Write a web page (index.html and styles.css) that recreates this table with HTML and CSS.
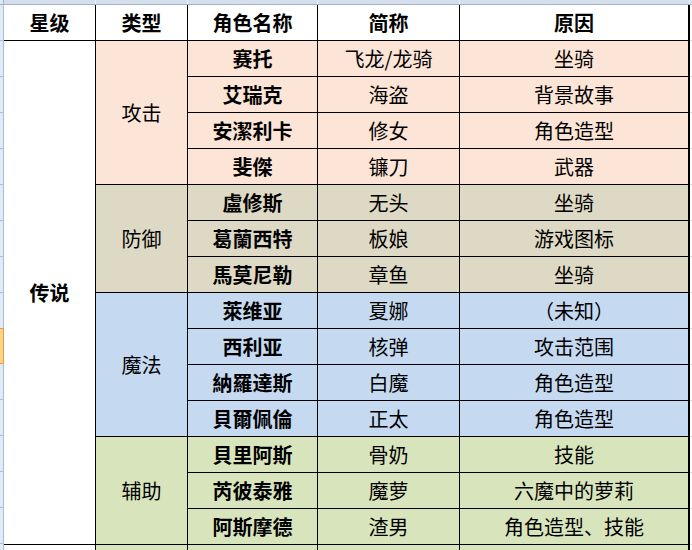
FILE: index.html
```html
<!DOCTYPE html>
<html lang="zh">
<head>
<meta charset="utf-8">
<title>角色</title>
<link rel="stylesheet" href="styles.css">
</head>
<body>
<div class="sheet">
  <div class="colhead">
    <div class="seg corner"></div>
    <div class="seg c1"></div>
    <div class="seg c2"></div>
    <div class="seg c3"></div>
    <div class="seg c4"></div>
    <div class="seg c5"></div>
    <div class="seg crest"></div>
  </div>
  <div class="body">
    <div class="rowhead">
      <div class="rh"></div><div class="rh"></div><div class="rh"></div><div class="rh"></div>
      <div class="rh"></div><div class="rh"></div><div class="rh"></div><div class="rh"></div>
      <div class="rh"></div><div class="rh sel"></div><div class="rh"></div><div class="rh"></div>
      <div class="rh"></div><div class="rh"></div><div class="rh"></div><div class="rh"></div>
    </div>
    <div class="grid">
      <div class="c h">星级</div>
      <div class="c h">类型</div>
      <div class="c h">角色名称</div>
      <div class="c h">简称</div>
      <div class="c h last">原因</div>

      <div class="c star span14">传说</div>
      <div class="c atk span4">攻击</div>
      <div class="c atk b">赛托</div><div class="c atk">飞龙/龙骑</div><div class="c atk last">坐骑</div>
      <div class="c atk b">艾瑞克</div><div class="c atk">海盗</div><div class="c atk last">背景故事</div>
      <div class="c atk b">安潔利卡</div><div class="c atk">修女</div><div class="c atk last">角色造型</div>
      <div class="c atk b">斐傑</div><div class="c atk">镰刀</div><div class="c atk last">武器</div>

      <div class="c def span3">防御</div>
      <div class="c def b">盧修斯</div><div class="c def">无头</div><div class="c def last">坐骑</div>
      <div class="c def b">葛蘭西特</div><div class="c def">板娘</div><div class="c def last">游戏图标</div>
      <div class="c def b">馬莫尼勒</div><div class="c def">章鱼</div><div class="c def last">坐骑</div>

      <div class="c mag span4">魔法</div>
      <div class="c mag b">萊维亚</div><div class="c mag">夏娜</div><div class="c mag last">（未知）</div>
      <div class="c mag b">西利亚</div><div class="c mag">核弹</div><div class="c mag last">攻击范围</div>
      <div class="c mag b">納羅達斯</div><div class="c mag">白魔</div><div class="c mag last">角色造型</div>
      <div class="c mag b">貝爾佩倫</div><div class="c mag">正太</div><div class="c mag last">角色造型</div>

      <div class="c sup span3">辅助</div>
      <div class="c sup b">貝里阿斯</div><div class="c sup">骨奶</div><div class="c sup last">技能</div>
      <div class="c sup b">芮彼泰雅</div><div class="c sup">魔萝</div><div class="c sup last">六魔中的萝莉</div>
      <div class="c sup b">阿斯摩德</div><div class="c sup">渣男</div><div class="c sup last">角色造型、技能</div>

      <div class="c star"></div>
      <div class="c sup"></div>
      <div class="c sup b"></div><div class="c sup"></div><div class="c sup last"></div>
    </div>
    <div class="rest">
      <div class="rr"></div><div class="rr"></div><div class="rr"></div><div class="rr"></div>
      <div class="rr"></div><div class="rr"></div><div class="rr"></div><div class="rr"></div>
      <div class="rr"></div><div class="rr"></div><div class="rr"></div><div class="rr"></div>
      <div class="rr"></div><div class="rr"></div><div class="rr"></div><div class="rr"></div>
    </div>
  </div>
</div>
</body>
</html>
```

FILE: styles.css
```css
html, body {
  margin: 0;
  padding: 0;
  background: #ffffff;
}
body {
  width: 692px;
  height: 550px;
  overflow: hidden;
  font-family: "Noto Sans CJK SC", "Noto Sans", sans-serif;
  font-size: 20px;
  color: #000;
}
.sheet {
  display: flex;
  flex-direction: column;
  height: 550px;
  overflow: hidden;
}
.colhead {
  flex: none;
  display: flex;
  height: 4px;
  background: #d5dfeb;
  border-bottom: 1px solid #9db4cf;
}
.seg {
  flex: none;
  box-sizing: border-box;
  height: 4px;
  border-right: 1px solid #eef2f8;
}
.corner { width: 4px; border-right: 1px solid #9db4cf; background: #dfe7f1; }
.c1 { width: 92px; }
.c2 { width: 92px; }
.c3 { width: 130px; }
.c4 { width: 142px; }
.c5 { width: 230px; }
.crest { flex: 1; border-right: none; }

.body {
  display: flex;
  align-items: flex-start;
  min-height: 0;
  overflow: hidden;
}
.rowhead {
  flex: none;
  width: 3px;
  background: #e1e9f4;
  border-right: 1px solid #a9bfd9;
  display: flex;
  flex-direction: column;
}
.rh {
  height: 35px;
  border-bottom: 1px solid #a9bfd9;
}
.rh.sel {
  background: #ffd58c;
  border-top: 1px solid #f29a3a;
  border-bottom: 1px solid #f29a3a;
  height: 34px;
  margin-top: -1px;
  margin-right: -1px;
  border-right: 1px solid #f29a3a;
}

.grid {
  flex: none;
  display: grid;
  grid-template-columns: 92px 92px 130px 142px 230px;
  grid-auto-rows: 36px;
}
.c {
  box-sizing: border-box;
  border-right: 1px solid #000;
  border-bottom: 1px solid #000;
  display: flex;
  align-items: center;
  justify-content: center;
  white-space: nowrap;
  padding-bottom: 1px;
}
.c.last { border-right: 2px solid #000; }
.h { font-weight: 700; background: #fff; }
.b { font-weight: 700; }
.star { background: #fff; font-weight: 700; }
.atk { background: #fce4d6; }
.def { background: #ddd9c4; }
.mag { background: #c5d9f1; }
.sup { background: #d8e4bc; }
.span14 { grid-row: span 14; }
.span4 { grid-row: span 4; }
.span3 { grid-row: span 3; }

.rest {
  flex: 1;
  display: flex;
  flex-direction: column;
}
.rr {
  height: 35px;
  border-bottom: 1px solid #d5d9df;
}
```
